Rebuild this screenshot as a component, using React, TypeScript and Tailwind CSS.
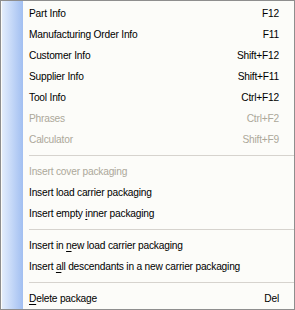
type Item = { label: React.ReactNode; shortcut?: string; disabled?: boolean } | "sep";

const u = (s: string) => <span className="underline underline-offset-2">{s}</span>;

const items: Item[] = [
  { label: "Part Info", shortcut: "F12" },
  { label: "Manufacturing Order Info", shortcut: "F11" },
  { label: "Customer Info", shortcut: "Shift+F12" },
  { label: "Supplier Info", shortcut: "Shift+F11" },
  { label: "Tool Info", shortcut: "Ctrl+F12" },
  { label: "Phrases", shortcut: "Ctrl+F2", disabled: true },
  { label: "Calculator", shortcut: "Shift+F9", disabled: true },
  "sep",
  { label: "Insert cover packaging", disabled: true },
  { label: "Insert load carrier packaging" },
  { label: <>Insert empty {u("i")}nner packaging</> },
  "sep",
  { label: <>Insert in {u("n")}ew load carrier packaging</> },
  { label: <>Insert {u("a")}ll descendants in a new carrier packaging</> },
  "sep",
  { label: <>{u("D")}elete package</>, shortcut: "Del" },
];

export default function App() {
  return (
    <div className="w-[295px] h-[310px] bg-white" style={{ fontFamily: '"Liberation Sans", Arial, sans-serif' }}>
      <div className="h-full border border-[#8e8e8e] bg-[#fcfcf9] flex">
        <div className="w-[21px] ml-px bg-gradient-to-r from-[#e3edfc] to-[#a2bff1]" />
        <div className="flex-1 flex flex-col pt-[2px] text-[10.2px] tracking-[-0.2px] whitespace-nowrap">
          {items.map((it, i) =>
            it === "sep" ? (
              <div key={i} className="h-[11px] flex items-center pl-[6px]">
                <div className="h-px w-full bg-[#d6d3ce]" />
              </div>
            ) : (
              <div
                key={i}
                className={`h-[21px] flex items-center justify-between pl-[6px] pr-[15px] ${it.disabled ? "text-[#aca899]" : "text-black"}`}
              >
                <span>{it.label}</span>
                {it.shortcut && <span>{it.shortcut}</span>}
              </div>
            )
          )}
        </div>
      </div>
    </div>
  );
}
